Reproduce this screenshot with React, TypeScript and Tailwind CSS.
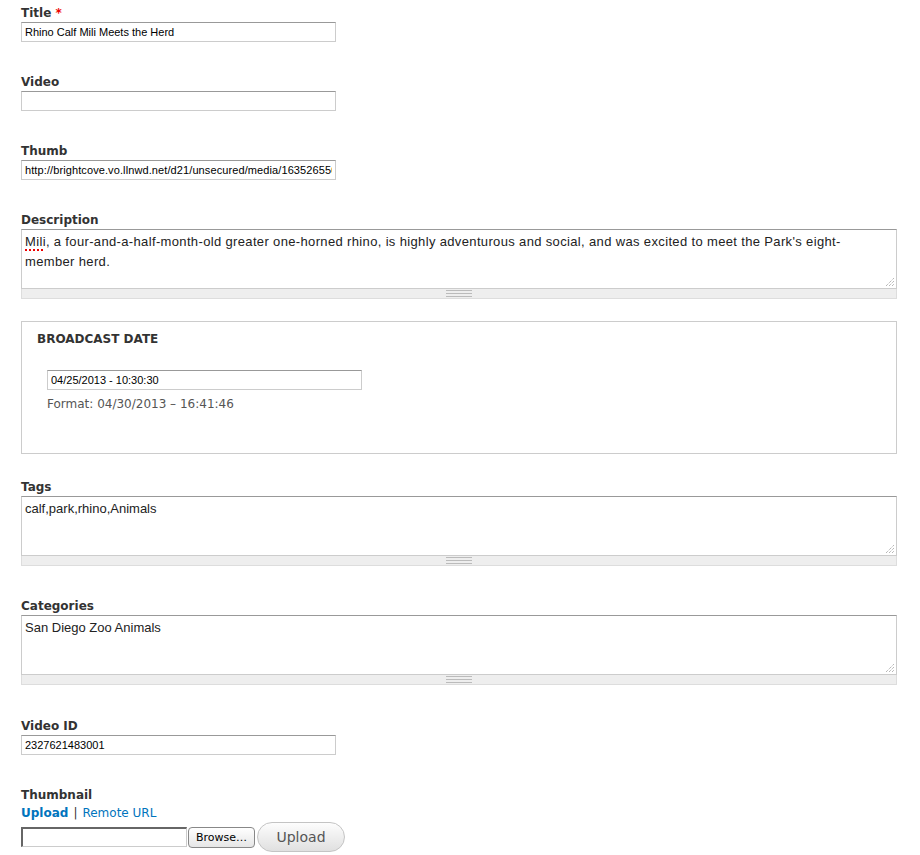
import React from "react";

const labelCls = "h-[17px] leading-[20px] mb-[2px] text-[12px] font-bold text-[#333]";
const inputCls =
	"block w-[315px] h-[20px] border border-[#ccc] border-t-[#999] px-[3px] text-[11px] font-['Liberation_Sans',Arial,sans-serif] text-black bg-white outline-none";

function FieldLabel({ children }: { children: React.ReactNode }) {
	return <div className={labelCls}>{children}</div>;
}

function ResizeHandle() {
	return (
		<svg
			className="absolute right-[2px] bottom-[2px]"
			width="10"
			height="10"
			viewBox="0 0 10 10"
		>
			<g stroke="#999" strokeWidth="1" strokeDasharray="1 1">
				<line x1="2" y1="10" x2="10" y2="2" />
				<line x1="5" y1="10" x2="10" y2="5" />
				<line x1="8" y1="10" x2="10" y2="8" />
			</g>
		</svg>
	);
}

function Grippie() {
	return (
		<div className="h-[10px] bg-[#eee] border border-t-0 border-[#ddd] flex items-center justify-center">
			<div className="w-[26px] flex flex-col gap-[2px]">
				<div className="h-px bg-[#bbb]" />
				<div className="h-px bg-[#bbb]" />
				<div className="h-px bg-[#bbb]" />
			</div>
		</div>
	);
}

function TextArea({ children, className = "" }: { children: React.ReactNode; className?: string }) {
	return (
		<div className="w-[876px]">
			<div
				className={`relative h-[60px] border border-[#ccc] border-t-[#999] bg-white px-[3px] pt-[2px] text-[13px] leading-[20px] text-[#222] font-['Liberation_Sans',Arial,sans-serif] ${className}`}
			>
				{children}
				<ResizeHandle />
			</div>
			<Grippie />
		</div>
	);
}

export default function App() {
	return (
		<div className="w-[920px] h-[855px] overflow-hidden bg-white pl-[21px] pt-[3px] font-['DejaVu_Sans',Verdana,sans-serif]">
			<div className="mb-[30px]">
				<FieldLabel>
					Title <span className="text-[#e00]">*</span>
				</FieldLabel>
				<input className={inputCls} readOnly value="Rhino Calf Mili Meets the Herd" />
			</div>

			<div className="mb-[30px]">
				<FieldLabel>Video</FieldLabel>
				<input className={inputCls} readOnly value="" />
			</div>

			<div className="mb-[30px]">
				<FieldLabel>Thumb</FieldLabel>
				<input
					className={`${inputCls} tracking-[0.1px]`}
					readOnly
					value="http://brightcove.vo.llnwd.net/d21/unsecured/media/1635265502001/201304/1635265502001_2327621483001_vs.jpg"
				/>
			</div>

			<div className="mb-[22px]">
				<FieldLabel>Description</FieldLabel>
				<TextArea className="tracking-[0.35px]">
					<span className="underline decoration-dotted decoration-[#e00] decoration-2 underline-offset-[3px]">
						Mili
					</span>
					, a four-and-a-half-month-old greater one-horned rhino, is highly adventurous and
					social, and was excited to meet the Park's eight-
					<br />
					member herd.
				</TextArea>
			</div>

			{/* broadcast date fieldset */}
			<div className="w-[876px] h-[133px] border border-[#ccc] mb-[23px] pt-[8px]">
				<div className="pl-[15px] h-[17px] leading-[19px] text-[12px] font-bold text-[#333]">
					BROADCAST DATE
				</div>
				<div className="pl-[25px] mt-[23px]">
					<input className={inputCls} readOnly value="04/25/2013 - 10:30:30" />
					<div className="mt-[5px] h-[17px] leading-[18px] text-[12px] text-[#555]">
						Format: 04/30/2013 – 16:41:46
					</div>
				</div>
			</div>

			<div className="mb-[30px]">
				<FieldLabel>Tags</FieldLabel>
				<TextArea>calf,park,rhino,Animals</TextArea>
			</div>

			<div className="mb-[31px]">
				<FieldLabel>Categories</FieldLabel>
				<TextArea>San Diego Zoo Animals</TextArea>
			</div>

			<div className="mb-[30px]">
				<FieldLabel>Video ID</FieldLabel>
				<input className={inputCls} readOnly value="2327621483001" />
			</div>

			<div>
				<FieldLabel>Thumbnail</FieldLabel>
				<div className="mt-[1px] h-[17px] leading-[19px] text-[12px] text-[#0074bd]">
					<span className="font-bold">Upload</span>
					<span className="text-[#333] mx-[5px]">|</span>
					<span>Remote URL</span>
				</div>
				<div className="mt-[1px] h-[30px] flex items-center">
					<div className="w-[166px] h-[20px] bg-white border border-[#ccc] border-t-2 border-l-2 border-t-[#666] border-l-[#666]" />
					<button className="ml-[1px] w-[67px] h-[21px] rounded-[4px] border border-[#888] bg-linear-to-b from-white to-[#e6e6e6] text-[11px] text-black leading-none">
						Browse…
					</button>
					<button className="ml-[2px] w-[88px] h-[30px] rounded-full border border-[#c4c4c4] bg-linear-to-b from-[#fdfdfd] to-[#e0e0e0] text-[14px] text-[#555]">
						Upload
					</button>
				</div>
			</div>
		</div>
	);
}
